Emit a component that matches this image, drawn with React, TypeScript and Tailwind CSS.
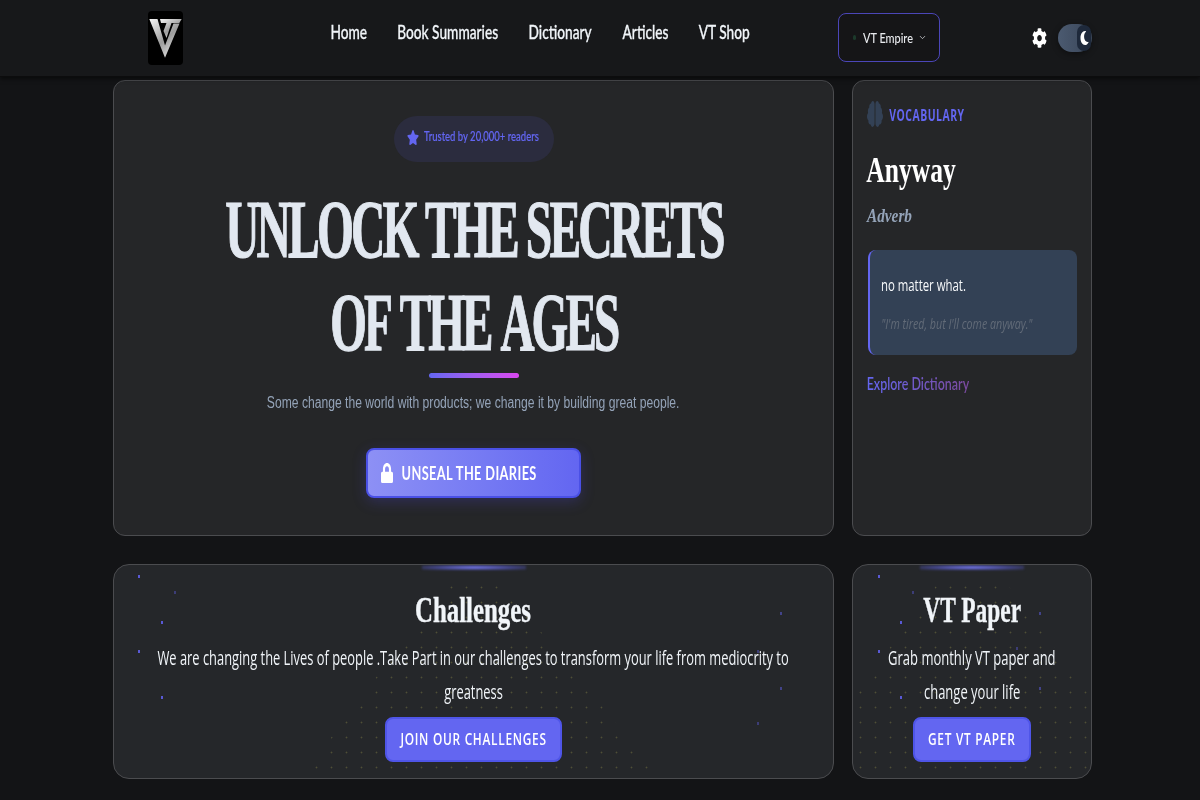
import { FaBrain, FaCog, FaLock, FaMoon, FaStar } from "react-icons/fa";
import { ChevronDown } from "lucide-react";
import type { ReactNode } from "react";

function Sq({ c, children }: { c: string; children: ReactNode }) {
  return <span className={"inline-block whitespace-nowrap " + c}>{children}</span>;
}

const navItems: [string, string][] = [
  ["Home", "w-[36px]"],
  ["Book Summaries", "w-[102px]"],
  ["Dictionary", "w-[63px]"],
  ["Articles", "w-[47px]"],
  ["VT Shop", "w-[50px]"],
];

function Logo() {
  return (
    <div className="w-[35px] h-[54px] bg-black rounded-[4px] shrink-0">
      <svg viewBox="0 0 35 54" className="w-[35px] h-[54px]">
        <defs>
          <linearGradient id="s" x1="0" y1="0" x2="0.7" y2="1">
            <stop offset="0" stopColor="#f6f6f6" />
            <stop offset="0.6" stopColor="#9c9c9c" />
            <stop offset="1" stopColor="#e2e2e2" />
          </linearGradient>
        </defs>
        <path d="M1.3 8L17 46.7L31.5 12.5H25.5L17 34.5L9.5 8Z" fill="url(#s)" />
        <path d="M12 8H33.7L31.3 12H23.5L18.5 27L15.5 20L18.5 12H13Z" fill="url(#s)" />
      </svg>
    </div>
  );
}

function Dots({ c }: { c: string }) {
  return (
    <div
      className={
        "absolute inset-0 bg-[radial-gradient(circle,#4f4f36_0.8px,transparent_1.1px)] bg-size-[15px_15px] " + c
      }
    />
  );
}

function Specks({ pts }: { pts: [number, number, number][] }) {
  return (
    <>
      {pts.map(([x, y, o], i) => (
        <span
          key={i}
          className="absolute w-[2px] h-[3px] bg-[#5f5fe8]"
          style={{ left: x, top: y, opacity: o }}
        />
      ))}
    </>
  );
}

function Glow() {
  return (
    <div className="absolute top-0 left-1/2 -translate-x-1/2 w-[104px] h-[5px] blur-[1px] bg-[radial-gradient(ellipse_at_center,#7d80fa_0%,rgba(99,102,241,0.45)_55%,transparent_100%)]" />
  );
}

function CTA({ label, w }: { label: string; w: string }) {
  return (
    <div className={"h-[45px] bg-[#6366f1] border-2 border-[#4f55e8] rounded-lg flex items-center justify-center text-white font-semibold text-[16.5px] tracking-[0.06em] font-['Open_Sans',sans-serif] " + w}>
      <Sq c="scale-x-[.72]">{label}</Sq>
    </div>
  );
}

export default function App() {
  return (
    <div className="w-[1200px] h-[800px] overflow-hidden bg-[#131416] font-['Lato',sans-serif]">
      <header className="h-[77px] bg-[#17181a] border-b border-[#0c0c0d] shadow-[0_2px_4px_rgba(0,0,0,0.5)] flex items-center pl-[148px] relative z-10">
        <Logo />
        <nav className="ml-[148px] flex gap-[30px] mb-[14px] text-[#f1f5f9] text-[20px] font-medium [-webkit-text-stroke:0.3px_#f1f5f9]">
          {navItems.map(([n, w]) => (
            <div key={n} className={"flex justify-center " + w}>
              <Sq c="scale-x-[.685]">{n}</Sq>
            </div>
          ))}
        </nav>
        <div className="ml-[89px] w-[102px] h-[49px] mb-[1px] rounded-lg border border-[#4b46b8] bg-[#151517] flex items-center pl-[14px] text-[#e8eaee] text-[14px] font-medium">
          <span className="w-[3px] h-[5px] rounded-full bg-[#1c3a2b]" />
          <div className="w-[49px] ml-[7px] flex justify-center">
            <Sq c="scale-x-[.78]">VT Empire</Sq>
          </div>
          <ChevronDown className="w-[9px] h-[9px] ml-[6px] text-[#d5d8de]" strokeWidth={2} />
        </div>
        <FaCog preserveAspectRatio="none" className="ml-[92px] w-[15px] h-[20px] mb-[1px] text-white" />
        <div className="ml-[11px] w-[34px] h-[28px] mb-[1px] rounded-full bg-gradient-to-r from-[#4b5a70] to-[#3a4659] flex items-center justify-end shadow-[0_2px_6px_rgba(0,0,0,0.4)]">
          <div className="w-[14px] h-[26px] mr-px rounded-full bg-[#1e293b] flex items-center justify-center">
            <FaMoon preserveAspectRatio="none" className="w-[9px] h-[14px] text-white" />
          </div>
        </div>
      </header>

      <main className="w-[979px] ml-[113px] mt-[3px] grid grid-cols-[721px_240px] grid-rows-[456px_215px] gap-x-[18px] gap-y-[28px]">
        <section className="relative bg-[#252628] border border-[#4b4c4f] rounded-[12px] flex flex-col items-center pt-[35px]">
          <div className="w-[160px] h-[46px] pb-[3px] rounded-full bg-[#2b2c3e] blur-[0.6px] flex items-center pl-[13px] text-[#6366f1] text-[12.5px] font-medium [-webkit-text-stroke:0.2px_#6366f1]">
            <FaStar preserveAspectRatio="none" className="w-[12px] h-[15px] shrink-0" />
            <div className="w-[115px] ml-[5px] flex justify-center">
              <Sq c="scale-x-[.76]">Trusted by 20,000+ readers</Sq>
            </div>
          </div>
          <h1 className="mt-[21px] text-[#e2e8f0] font-bold text-[82px] leading-[93px] text-center font-['Liberation_Serif',serif] tracking-[-0.06em] [-webkit-text-stroke:1.2px_#e2e8f0]">
            <Sq c="scale-x-[.58]">UNLOCK THE SECRETS</Sq>
            <br />
            <Sq c="scale-x-[.575] [word-spacing:0.07em]">OF THE AGES</Sq>
          </h1>
          <div className="mt-[4px] w-[90px] h-[5px] rounded-full bg-gradient-to-r from-[#6366f1] to-[#d946ef]" />
          <p className="mt-[13px] text-[#94a3b8] text-[16px] leading-[24px] font-['Liberation_Sans',sans-serif]">
            <Sq c="scale-x-[.758]">Some change the world with products; we change it by building great people.</Sq>
          </p>
          <div className="mt-[33px] w-[215px] h-[50px] rounded-lg border-2 border-[#4a50e6] bg-gradient-to-r from-[#8d90f5] to-[#6366f1] flex items-center pl-[13px] text-white shadow-[0_4px_14px_rgba(79,70,229,0.25)]">
            <FaLock preserveAspectRatio="none" className="w-[12px] h-[20px] shrink-0" />
            <div className="w-[135px] ml-[9px] flex justify-center font-bold text-[18px] tracking-[0.03em]">
              <Sq c="scale-x-[.71]">UNSEAL THE DIARIES</Sq>
            </div>
          </div>
        </section>

        <aside className="bg-[#252628] border border-[#4b4c4f] rounded-[12px] pl-[14px] pr-[14px] pt-[20px]">
          <div className="flex items-center h-[26px]">
            <FaBrain preserveAspectRatio="none" className="w-[16px] h-[26px] text-[#334155]" />
            <div className="ml-[6px] mt-[1px] w-[76px] flex justify-center text-[#6366f1] text-[16px] font-bold tracking-[0.05em] font-['Open_Sans',sans-serif]">
              <Sq c="scale-x-[.65]">VOCABULARY</Sq>
            </div>
          </div>
          <div className="mt-[21px] w-[89px] flex justify-center text-white font-bold text-[36px] leading-[44px] font-['Liberation_Serif',serif]">
            <Sq c="scale-x-[.71]">Anyway</Sq>
          </div>
          <div className="mt-[12px] w-[44px] flex justify-center text-[#94a3b8] italic font-bold text-[18px] leading-[24px] font-['Liberation_Serif',serif]">
            <Sq c="scale-x-[.85]">Adverb</Sq>
          </div>
          <div className="mt-[22px] w-[209px] h-[105px] ml-px bg-[#334155] border-l-2 border-[#6366f1] rounded-lg pl-[11px] pt-[23px]">
            <div className="w-[85px] flex justify-center text-[#f8fafc] text-[17px] leading-[24px] font-['Open_Sans',sans-serif]">
              <Sq c="scale-x-[.67]">no matter what.</Sq>
            </div>
            <div className="mt-[16px] w-[151px] flex justify-center text-[#626b78] italic text-[14.5px] leading-[22px] font-['Open_Sans',sans-serif]">
              <Sq c="scale-x-[.736]">"I'm tired, but I'll come anyway."</Sq>
            </div>
          </div>
          <div className="mt-[17px] w-[102px] flex justify-center text-[16.5px] leading-[24px] font-semibold">
            <Sq c="scale-x-[.755] text-transparent bg-clip-text bg-gradient-to-r from-[#6366f1] to-[#7c4a9e]">Explore Dictionary</Sq>
          </div>
        </aside>

        <section className="relative overflow-hidden bg-[#25272a] border border-[#4b4c4f] rounded-[16px] flex flex-col items-center pt-[23px]">
          <Dots c="[clip-path:polygon(47%_5%,53%_5%,76%_100%,26%_100%)]" />
          <Specks pts={[[24,10,.9],[60,26,.4],[47,56,.9],[24,85,.9],[47,131,.9],[666,47,.5],[643,85,.4],[666,122,.5],[643,157,.4]]} />
          <Glow />
          <h2 className="relative text-[#f1f5f9] font-bold text-[36px] leading-[44px] font-['Liberation_Serif',serif] [-webkit-text-stroke:0.4px_#f1f5f9]">
            <Sq c="scale-x-[.69]">Challenges</Sq>
          </h2>
          <p className="relative mt-[9px] text-[#f1f5f9] text-[20px] leading-[34px] text-center font-['Open_Sans',sans-serif]">
            <Sq c="scale-x-[.644]">We are changing the Lives of people .Take Part in our challenges to transform your life from mediocrity to</Sq>
            <br />
            <Sq c="scale-x-[.644]">greatness</Sq>
          </p>
          <div className="relative mt-[8px]">
            <CTA label="JOIN OUR CHALLENGES" w="w-[177px]" />
          </div>
        </section>

        <section className="relative overflow-hidden bg-[#25272a] border border-[#4b4c4f] rounded-[16px] flex flex-col items-center pt-[23px]">
          <Dots c="[clip-path:polygon(38%_5%,62%_5%,100%_62%,100%_100%,0_100%,0_62%)]" />
          <Specks pts={[[25,10,.9],[59,26,.4],[47,56,.9],[25,85,.9],[47,131,.9],[186,47,.5],[163,82,.4],[186,122,.5]]} />
          <Glow />
          <h2 className="relative text-[#f1f5f9] font-bold text-[36px] leading-[44px] font-['Liberation_Serif',serif] [-webkit-text-stroke:0.4px_#f1f5f9]">
            <Sq c="scale-x-[.65]">VT Paper</Sq>
          </h2>
          <p className="relative mt-[9px] text-[#f1f5f9] text-[20px] leading-[34px] text-center font-['Open_Sans',sans-serif]">
            <Sq c="scale-x-[.65]">Grab monthly VT paper and</Sq>
            <br />
            <Sq c="scale-x-[.65]">change your life</Sq>
          </p>
          <div className="relative mt-[8px]">
            <CTA label="GET VT PAPER" w="w-[118px]" />
          </div>
        </section>
      </main>
    </div>
  );
}
